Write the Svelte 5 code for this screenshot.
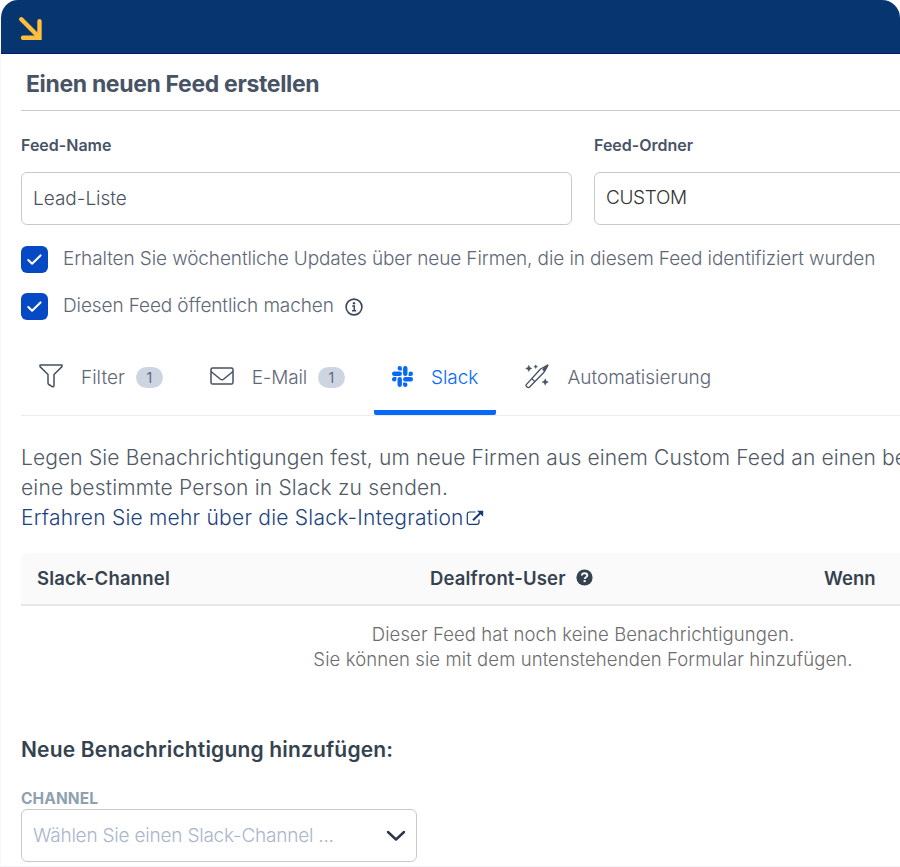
<script lang="ts">
  let feedName = $state('Lead-Liste');
  let weeklyUpdates = $state(true);
  let isPublic = $state(true);
  let activeTab = $state('slack');

  const tabs = [
    { id: 'filter', label: 'Filter', count: 1 },
    { id: 'email', label: 'E-Mail', count: 1 },
    { id: 'slack', label: 'Slack', count: 0 },
    { id: 'auto', label: 'Automatisierung', count: 0 },
  ];
</script>

<div class="window">
  <header class="topbar">
    <svg class="logo" width="24" height="24" viewBox="0 0 24 24" fill="none" stroke="#ffbe3c" stroke-width="4.4" stroke-linecap="round">
      <path d="M2.3 2.3 19.5 19.5" />
      <path d="M4 20.7H20.5V4.2" stroke-linejoin="miter" />
    </svg>
  </header>

  <main>
    <h1>Einen neuen Feed erstellen</h1>

    <div class="fields">
      <div class="field">
        <label for="feed-name">Feed-Name</label>
        <input id="feed-name" class="box" type="text" bind:value={feedName} />
      </div>
      <div class="field">
        <span class="field-label">Feed-Ordner</span>
        <div class="box folder">CUSTOM</div>
      </div>
    </div>

    <label class="check">
      <input type="checkbox" bind:checked={weeklyUpdates} />
      <span class="tick">
        {#if weeklyUpdates}{@render tick()}{/if}
      </span>
      <span>Erhalten Sie wöchentliche Updates über neue Firmen, die in diesem Feed identifiziert wurden</span>
    </label>
    <label class="check">
      <input type="checkbox" bind:checked={isPublic} />
      <span class="tick">
        {#if isPublic}{@render tick()}{/if}
      </span>
      <span>Diesen Feed öffentlich machen</span>
      <svg class="info" width="18" height="18" viewBox="0 0 18 18">
        <circle cx="9" cy="9" r="7.9" fill="none" stroke="#3c4759" stroke-width="1.6" />
        <circle cx="9" cy="5.2" r="1.2" fill="#3c4759" />
        <path d="M7.2 8H9.3V12.7M7 12.8H11.2" fill="none" stroke="#3c4759" stroke-width="1.5" />
      </svg>
    </label>

    <nav class="tabs">
      {#each tabs as tab}
        <button class={`tab ${tab.id}`} class:active={activeTab === tab.id} onclick={() => (activeTab = tab.id)}>
          {@render icon(tab.id)}
          <span class="tab-label">{tab.label}</span>
          {#if tab.count}<span class="badge">{tab.count}</span>{/if}
        </button>
      {/each}
    </nav>

    <div class="intro">
      <p class="first">Legen Sie Benachrichtigungen fest, um neue Firmen aus einem Custom Feed an einen be</p>
      <p class="second">eine bestimmte Person in Slack zu senden.</p>
      <a href="#slack">
        <span>Erfahren Sie mehr über die Slack-Integration</span>
        <svg width="18" height="16" viewBox="0 0 18 16" fill="none" stroke="#123a78">
          <path d="M9.5 2H3.5Q1.3 2 1.3 4.2V12.3Q1.3 14.4 3.5 14.4H10.8Q13 14.4 13 12.3V9.5" stroke-width="1.2" />
          <path d="M7 10.3 15 2.5" stroke-width="2" />
          <path d="M11 .7H17.2V6.8Z" fill="#123a78" stroke="none" />
        </svg>
      </a>
    </div>

    <div class="table">
      <div class="thead">
        <span class="channel-col">Slack-Channel</span>
        <span class="user-col">
          <span>Dealfront-User</span>
          <svg width="17" height="17" viewBox="0 0 17 17">
            <circle cx="8.5" cy="8.5" r="8.1" fill="#35424f" />
            <path d="M5.8 6.5C6 4.9 7 4.2 8.5 4.2C10.2 4.2 11.3 5.1 11.3 6.5C11.3 8.3 8.7 8.2 8.7 10" fill="none" stroke="#fafafa" stroke-width="1.9" />
            <rect x="7.6" y="11.1" width="2.1" height="2" fill="#fafafa" />
          </svg>
        </span>
        <span>Wenn</span>
      </div>
      <div class="empty">
        <p>Dieser Feed hat noch keine Benachrichtigungen.</p>
        <p>Sie können sie mit dem untenstehenden Formular hinzufügen.</p>
      </div>
    </div>

    <h2>Neue Benachrichtigung hinzufügen:</h2>
    <div class="caption">CHANNEL</div>
    <button class="box select">
      <span>Wählen Sie einen Slack-Channel ...</span>
      <svg width="20" height="12" viewBox="0 0 20 12" fill="none" stroke="#2b3648" stroke-width="2.4" stroke-linecap="round" stroke-linejoin="round">
        <path d="M2 2 10 9.5 18 2" />
      </svg>
    </button>
  </main>
</div>

{#snippet tick()}
  <svg width="16" height="12" viewBox="0 0 16 12" fill="none" stroke="#fff" stroke-width="2.1" stroke-linecap="round" stroke-linejoin="round">
    <path d="M1.3 6 5.1 9.7 13.5 1.4" />
  </svg>
{/snippet}

{#snippet icon(id: string)}
  {#if id === 'filter'}
    <svg width="24" height="24" viewBox="0 0 24 24" fill="none" stroke="#465063" stroke-width="1.5" stroke-linejoin="round">
      <path d="M1 1H23V2.6L15 10.5V21.5Q14.8 23.2 13.3 22.7L9.8 20.5Q9 20 9 19V10.5L1 2.6Z" />
    </svg>
  {:else if id === 'email'}
    <svg width="24" height="18" viewBox="0 0 24 18" fill="none" stroke="#465063" stroke-width="1.5" stroke-linejoin="round">
      <rect x="1" y=".9" width="22" height="16.2" rx="1.6" />
      <path d="M1 4.5 10.2 12Q12 13.4 13.8 12L23 4.5" />
    </svg>
  {:else if id === 'slack'}
    <svg width="21" height="21" viewBox="0 0 24 24" fill="currentColor">
      <path d="M5.04 15.17a2.53 2.53 0 1 1-2.52-2.53h2.52zM6.31 15.17a2.52 2.52 0 0 1 5.05 0v6.31a2.52 2.52 0 0 1-5.05 0zM8.83 5.04a2.52 2.52 0 1 1 2.53-2.52v2.52zM8.83 6.31a2.52 2.52 0 0 1 0 5.05H2.52a2.52 2.52 0 0 1 0-5.05zM18.96 8.83a2.52 2.52 0 1 1 2.52 2.53h-2.52zM17.69 8.83a2.52 2.52 0 0 1-5.05 0V2.52a2.52 2.52 0 0 1 5.05 0zM15.17 18.96a2.52 2.52 0 1 1-2.53 2.52v-2.52zM15.17 17.69a2.52 2.52 0 0 1 0-5.05h6.31a2.52 2.52 0 0 1 0 5.05z" />
    </svg>
  {:else}
    <svg width="24" height="25" viewBox="0 0 24 25" fill="none" stroke="#465063" stroke-width="1.3" stroke-linejoin="round">
      <path d="M1.3 20.6 15.5 5 22.8 1.2 19 8.2 4.6 23Q3.4 24.2 2 23Q.4 21.8 1.3 20.6ZM6.8 14.6 9.6 17.4" />
      <path d="M18 5.6 22.8 1.2 19.6 7Z" fill="#465063" />
      <path d="M3.8 1.2 4.8 3.4 7 4.4 4.8 5.4 3.8 7.6 2.8 5.4 .6 4.4 2.8 3.4ZM20.2 14.8 21.2 17 23.4 18 21.2 19 20.2 21.2 19.2 19 17 18 19.2 17ZM10.7 .8 11.3 2.1 12.6 2.7 11.3 3.3 10.7 4.6 10.1 3.3 8.8 2.7 10.1 2.1Z" fill="#465063" stroke-width=".4" />
    </svg>
  {/if}
{/snippet}

<style>
  :global(body) {
    background: #fff;
    overflow: hidden;
  }

  .window {
    box-sizing: border-box;
    width: 900px;
    height: 867px;
    overflow: hidden;
    border-left: 1px solid #f8f8fa;
    border-bottom: 1px solid #f3f3f5;
    border-radius: 18px 18px 0 0;
    background: #fff;
    font-family: Inter, "Liberation Sans", sans-serif;
    font-size: 19px;
    color: #5e6778;
    white-space: nowrap;
  }

  .topbar {
    box-sizing: border-box;
    height: 54px;
    margin-left: -1px;
    padding: 17px 0 0 19px;
    background: #07356f;
    border-bottom: 1px solid #001a68;
  }

  svg {
    display: block;
    flex: none;
  }

  main {
    padding-left: 20px;
  }

  h1,
  h2,
  p {
    margin: 0;
  }

  h1 {
    box-sizing: border-box;
    height: 57px;
    padding-left: 5px;
    border-bottom: 1px solid #c9cacc;
    font-size: 23px;
    line-height: 60px;
    font-weight: 700;
    letter-spacing: -0.35px;
    color: #485366;
  }

  .fields {
    display: grid;
    grid-template-columns: 551px 551px;
    gap: 22px;
    padding-top: 22px;
  }

  .field label,
  .field-label {
    display: block;
    height: 39px;
    line-height: 25px;
    font-size: 16px;
    font-weight: 600;
    color: #485366;
  }

  .box {
    box-sizing: border-box;
    display: flex;
    align-items: center;
    width: 551px;
    height: 53px;
    padding: 0 11px;
    border: 1px solid #c8c9cb;
    border-radius: 6px;
    background: #fff;
    font: 300 19px Inter, "Liberation Sans", sans-serif;
    color: #4a5160;
  }

  .box.folder {
    padding-bottom: 3px;
    letter-spacing: -0.35px;
    color: #333;
  }

  .check {
    display: flex;
    align-items: center;
    height: 27px;
    margin-top: 20px;
    font-weight: 300;
    line-height: 25px;
    letter-spacing: -0.11px;
  }

  .fields + .check {
    margin-top: 21px;
  }

  .check > span:not(.tick) {
    padding-bottom: 2px;
  }

  .check input {
    position: absolute;
    opacity: 0;
  }

  .tick {
    display: grid;
    place-items: center;
    width: 27px;
    height: 27px;
    margin-right: 15px;
    border-radius: 6px;
    background: #0549c4;
  }

  .info {
    margin-left: 11px;
  }

  .tabs {
    display: flex;
    gap: 11px;
    height: 75px;
    margin-top: 20px;
    border-bottom: 1px solid #ececf0;
  }

  .tab {
    box-sizing: border-box;
    display: flex;
    align-items: center;
    height: 75px;
    padding: 2px 18px 0;
    border: 0;
    border-bottom: 5px solid transparent;
    background: none;
    font: 300 19px Inter, "Liberation Sans", sans-serif;
    color: #5e6778;
  }

  .tab-label {
    margin-left: 18px;
    padding-top: 2px;
  }

  .tab.email .tab-label {
    letter-spacing: -0.2px;
  }

  .tab.active {
    color: #0869f8;
    border-bottom-color: #0869f8;
    border-radius: 2px;
  }

  .badge {
    width: 27px;
    margin: 2px 0 0 11px;
    border-radius: 11px;
    background: #cdd5e3;
    font-size: 14px;
    line-height: 21px;
    text-align: center;
    font-weight: 400;
  }

  .intro {
    padding-top: 27px;
    font-size: 21px;
    line-height: 30px;
    font-weight: 300;
    color: #505966;
  }

  .first {
    letter-spacing: 0.13px;
  }

  .second {
    letter-spacing: 0.19px;
    line-height: 29px;
  }

  .intro a {
    display: flex;
    align-items: center;
    gap: 2px;
    line-height: 31px;
    letter-spacing: 0.23px;
    color: #1d437e;
    text-decoration: none;
  }

  .table {
    width: 1124px;
    margin-top: 20px;
  }

  .thead {
    box-sizing: border-box;
    display: grid;
    grid-template-columns: 393px 394px 1fr;
    align-items: center;
    height: 53px;
    padding: 0 0 2px 16px;
    border-bottom: 2px solid #e5e9ed;
    border-radius: 6px 6px 0 0;
    background: #fafafa;
    font-size: 18.5px;
    font-weight: 600;
    color: #35424f;
  }

  .channel-col {
    letter-spacing: 0.2px;
  }

  .user-col {
    display: flex;
    align-items: center;
    gap: 10px;
    letter-spacing: 0.15px;
  }

  .empty {
    height: 113px;
    padding-top: 16px;
    font-size: 18.5px;
    line-height: 25px;
    font-weight: 300;
    letter-spacing: 0.1px;
    text-align: center;
    color: #6c6c6e;
  }

  h2 {
    font-size: 21px;
    line-height: 30px;
    font-weight: 600;
    letter-spacing: 0.17px;
    color: #35424f;
  }

  .caption {
    padding-top: 23px;
    font-size: 15.5px;
    line-height: 21px;
    font-weight: 700;
    letter-spacing: 0.1px;
    color: #8fa0af;
  }

  .box.select {
    width: 396px;
    justify-content: space-between;
    padding-right: 10px;
    letter-spacing: -0.21px;
    color: #a9b5cb;
  }
</style>
